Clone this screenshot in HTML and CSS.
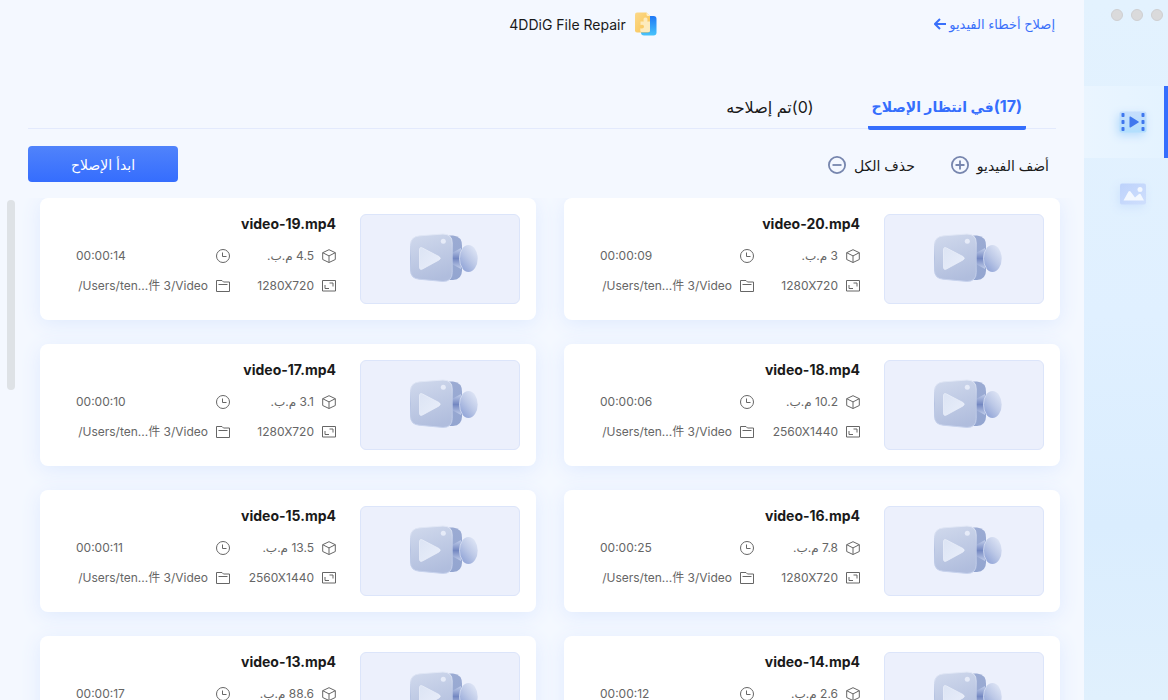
FILE: index.html
```html
<!DOCTYPE html>
<html lang="ar" dir="rtl">
<head>
<meta charset="utf-8">
<meta name="viewport" content="width=device-width, initial-scale=1">
<title>4DDiG File Repair</title>
<link rel="stylesheet" href="styles.css">
</head>
<body>
<svg class="sprite" aria-hidden="true">
  <defs>
    <linearGradient id="cam-body" x1=".2" y1="0" x2=".5" y2="1"><stop offset="0" stop-color="#cfd8ec"/><stop offset="1" stop-color="#b0bddd"/></linearGradient>
    <linearGradient id="cam-edge" x1="0" y1="0" x2="0" y2="1"><stop offset="0" stop-color="#e2e8f6"/><stop offset=".5" stop-color="#b6c3e2"/><stop offset="1" stop-color="#c8d3ed"/></linearGradient>
    <linearGradient id="cam-back" x1="0" y1="0" x2="0" y2="1"><stop offset="0" stop-color="#9babd3"/><stop offset="1" stop-color="#93a5d0"/></linearGradient>
    <linearGradient id="cam-play" x1="0" y1="0" x2="1" y2="1"><stop offset="0" stop-color="#dce4f4"/><stop offset="1" stop-color="#e9eefa"/></linearGradient>
    <linearGradient id="cam-neck" x1="0" y1="0" x2="0" y2="1"><stop offset="0" stop-color="#c3cfeb"/><stop offset=".5" stop-color="#7387c1"/><stop offset="1" stop-color="#c3cfeb"/></linearGradient>
    <linearGradient id="cam-lens" x1=".85" y1=".1" x2=".2" y2=".9"><stop offset="0" stop-color="#dde4f5"/><stop offset=".5" stop-color="#bdc9e7"/><stop offset="1" stop-color="#93a6d8"/></linearGradient>
    <linearGradient id="logo-gold" x1="0" y1="0" x2="1" y2="1"><stop offset="0" stop-color="#fcd98a"/><stop offset="1" stop-color="#f8c352"/></linearGradient>
    <linearGradient id="logo-blue" x1="0" y1="0" x2="0" y2="1"><stop offset="0" stop-color="#1f78f5"/><stop offset="1" stop-color="#48c4fb"/></linearGradient>
    <linearGradient id="nav-film" x1="0" y1="0" x2="0" y2="1"><stop offset="0" stop-color="#c6defd"/><stop offset="1" stop-color="#b2dffd"/></linearGradient>
    <linearGradient id="nav-photo" x1="0" y1="0" x2="1" y2="1"><stop offset="0" stop-color="#bdd2fb"/><stop offset="1" stop-color="#cfdffd"/></linearGradient>
  </defs>
  <symbol id="camera" viewBox="0 0 68 50">
    <path d="M36 2.500h7q9 1 9 10v25q0 9-9 9.500h-7z" fill="url(#cam-back)"/>
    <path d="M42 20l9-5v21l-9-5z" fill="url(#cam-neck)"/>
    <ellipse cx="58.500" cy="25.500" rx="9.200" ry="13.500" fill="url(#cam-lens)"/>
    <path d="M52.500 15.500q-3 4-3 10t3 10" fill="none" stroke="#d3dcf1" stroke-width=".8"/>
    <path d="M10 2.800L33 1q9.200 0 9.200 9v29.500q0 9-9.200 9L9 46.200Q.5 45.500.5 37V12.500Q.5 3.500 10 2.800z" fill="url(#cam-body)" stroke="url(#cam-edge)"/>
    <path d="M9.500 17q0-3.500 3-2l16.500 8.500q2.500 1.500 0 3.500l-16.500 9q-3 1.500-3-2z" fill="url(#cam-play)" stroke="#edf1fb" stroke-width=".7"/>
    <circle cx="33.300" cy="8.300" r="2.500" fill="#e6ebf8"/>
  </symbol>
  <symbol id="cube" viewBox="0 0 14 14"><path d="M7 .7l6.300 3v6.800l-6.300 3-6.300-3V3.700zM.7 3.700l6.300 3.200 6.300-3.200M7 6.900v6.500" fill="none" stroke="currentColor" stroke-linejoin="round"/></symbol>
  <symbol id="clock" viewBox="0 0 14 14"><circle cx="7" cy="7" r="6.500" fill="none" stroke="currentColor"/><path d="M6.500 3.500v4h4" fill="none" stroke="currentColor"/></symbol>
  <symbol id="frame" viewBox="0 0 14 14"><path d="M.5 1.500h13v10.500H.5z" fill="none" stroke="currentColor"/><path d="M3 6v3.500h4M7.500 4h3.500v3.500" fill="none" stroke="currentColor"/></symbol>
  <symbol id="folder" viewBox="0 0 14 14"><path d="M.5 12.500v-11h5.500l1.500 1.500h6v9.500zM2.500 5.500h9" fill="none" stroke="currentColor"/></symbol>
</svg>

<div class="window">
  <aside class="sidebar">
    <div class="lights"><span class="light"></span><span class="light"></span><span class="light"></span></div>
    <nav class="nav">
      <button class="nav-item nav-item-active" type="button" aria-label="الفيديو">
        <svg class="nav-icon" viewBox="0 0 28 24"><rect x=".5" y="1.500" width="27" height="21" rx="2" fill="url(#nav-film)"/><g fill="#3f77ee"><rect x="2.500" y="3" width="3" height="4" rx=".8"/><rect x="2.500" y="10" width="3" height="4" rx=".8"/><rect x="2.500" y="17" width="3" height="4" rx=".8"/><rect x="22.500" y="3" width="3" height="4" rx=".8"/><rect x="22.500" y="10" width="3" height="4" rx=".8"/><rect x="22.500" y="17" width="3" height="4" rx=".8"/><path d="M10.500 7.200q0-1.200 1-.6l8 4.800q.9.600 0 1.200l-8 4.800q-1 .6-1-.6z"/></g></svg>
      </button>
      <button class="nav-item" type="button" aria-label="الصور">
        <svg class="nav-icon nav-icon-dim" viewBox="0 0 28 24"><rect x="1" y="1.500" width="26" height="21" rx="2" fill="url(#nav-photo)"/><path d="M4.500 18.500L9.500 9.500q1-1.200 2 0l4.500 6 4-3.500q.8-.6 1.500 0l3.500 6.500z" fill="#f3f8ff"/><circle cx="21" cy="7.500" r="2.500" fill="#f3f8ff"/></svg>
      </button>
    </nav>
  </aside>

  <main class="main">
    <header class="header">
      <button class="back" type="button">إصلاح أخطاء الفيديو
        <svg class="back-icon" viewBox="0 0 12 12"><path d="M12 6H1.500M6 1L1 6l5 5" fill="none" stroke="currentColor" stroke-width="2"/></svg>
      </button>
      <h1 class="brand">
        <svg class="brand-logo" viewBox="0 0 24 24"><rect x="7" y="4" width="15.500" height="19.500" rx="3" fill="url(#logo-blue)"/><path d="M3 .5h9.500L16 4v14.500q0 2-2 2H3q-2 0-2-2V2.500q0-2 2-2z" fill="url(#logo-gold)"/><path d="M6.500 9.500h3.200Q8.800 5.500 11.500 5.500T13.300 9.500H16v9q0 1.500-1.500 1.500h-7q-1.200 0-1.200-1.200v-2.600q3.700.8 3.700-1.700T6.500 13z" fill="#fdebbd"/><path d="M12.500.5L16 4h-2q-1.500 0-1.500-1.500z" fill="#fff0c9"/></svg>
        <span dir="ltr">4DDiG File Repair</span>
      </h1>
    </header>

    <div class="tabs" role="tablist">
      <button class="tab tab-active" type="button" role="tab" aria-selected="true"><span class="count">(17)</span>في انتظار الإصلاح</button>
      <button class="tab" type="button" role="tab" aria-selected="false">(0)تم إصلاحه</button>
    </div>

    <div class="toolbar">
      <button class="tool" type="button">أضف الفيديو
        <svg class="tool-icon" viewBox="0 0 18 18"><circle cx="9" cy="9" r="8.100"/><path d="M4.500 9h9M9 4.500v9"/></svg>
      </button>
      <button class="tool" type="button">حذف الكل
        <svg class="tool-icon" viewBox="0 0 18 18"><circle cx="9" cy="9" r="8.100"/><path d="M4.500 9h9"/></svg>
      </button>
      <button class="start" type="button">ابدأ الإصلاح</button>
    </div>

    <div class="content">
      <ul class="list" id="list"></ul>
      <div class="rail"><div class="thumb-bar"></div></div>
    </div>
  </main>
</div>
<script src="app.js"></script>
</body>
</html>
```
FILE: app.js
```js
const videos = [
  [20, "3", "00:00:09", "1280X720"],
  [19, "4.5", "00:00:14", "1280X720"],
  [18, "10.2", "00:00:06", "2560X1440"],
  [17, "3.1", "00:00:10", "1280X720"],
  [16, "7.8", "00:00:25", "1280X720"],
  [15, "13.5", "00:00:11", "2560X1440"],
  [14, "2.6", "00:00:12", "1280X720"],
  [13, "88.6", "00:00:17", "1280X720"]
];

const icon = (name) => `<svg class="meta-icon"><use href="#${name}"/></svg>`;

document.getElementById("list").innerHTML = videos.map(([id, size, time, dims]) => `
  <li class="card">
    <div class="preview"><svg class="camera"><use href="#camera"/></svg></div>
    <div class="info">
      <h2 class="name" dir="ltr">video-${id}.mp4</h2>
      <div class="meta">
        <div class="field">${icon("cube")}<span>${size} م.ب.</span></div>
        <div class="field">${icon("clock")}<span class="time" dir="ltr">${time}</span></div>
        <div class="field">${icon("frame")}<span dir="ltr">${dims}</span></div>
        <div class="field">${icon("folder")}<span dir="ltr">/Users/ten...件 3/Video</span></div>
      </div>
    </div>
  </li>`).join("");
```
FILE: styles.css
```css
* {
  box-sizing: border-box;
}

body {
  margin: 0;
  font-family: Inter, "DejaVu Sans", "Noto Sans CJK SC", sans-serif;
  font-size: 14px;
  color: #1a1a1a;
  background: #f4f8ff;
}

button {
  padding: 0;
  border: 0;
  background: none;
  color: inherit;
  font: inherit;
  cursor: pointer;
}

svg {
  display: block;
  flex: none;
}

.sprite {
  position: absolute;
  width: 0;
  height: 0;
}

.window {
  display: flex;
  height: 100vh;
  overflow: hidden;
}

.sidebar {
  flex: 0 0 84px;
  background: linear-gradient(180deg, #e3f2fe 0%, #e0f0ff 45%, #daedfe 75%, #e0f0fd 100%);
}

.lights {
  display: flex;
  gap: 8px;
  height: 86px;
  padding: 9px 5px 0;
}

.light {
  width: 12px;
  height: 12px;
  border: 1px solid #cfcfd1;
  border-radius: 50%;
  background: #dadadb;
}

.nav-item {
  display: flex;
  align-items: center;
  justify-content: center;
  width: 100%;
  height: 72px;
  padding-left: 14px;
}

.nav-item-active {
  padding-left: 18px;
  border-right: 4px solid #356efd;
  background: linear-gradient(90deg, #eaf5ff, #e4f3ff);
}

.nav-icon {
  width: 28px;
  height: 24px;
  filter: drop-shadow(-2px 3px 4px #b9dcfc);
}

.nav-icon-dim {
  filter: drop-shadow(-2px 3px 4px #cfe3fd);
}

.main {
  display: flex;
  flex: 1;
  flex-direction: column;
  min-width: 0;
}

.header {
  display: grid;
  grid-template-columns: 1fr auto 1fr;
  align-items: center;
  height: 48px;
  padding: 0 29px 0 112px;
}

.back {
  display: flex;
  align-items: center;
  justify-self: start;
  gap: 3px;
  color: #3a70fa;
  font-size: 13px;
}

.back-icon {
  width: 12px;
  height: 12px;
}

.brand {
  display: flex;
  align-items: center;
  gap: 8px;
  margin: 0;
  font-size: 14px;
  font-weight: 400;
}

.brand-logo {
  width: 24px;
  height: 24px;
}

.tabs {
  display: flex;
  gap: 50px;
  margin: 38px 28px 0;
  padding: 0 30px;
  border-bottom: 1px solid #e3eafd;
}

.tab {
  height: 42px;
  padding: 0 4px;
  font-size: 16px;
}

.tab-active {
  height: 44px;
  margin-bottom: -2px;
  border-bottom: 4px solid #356efd;
  border-radius: 2px;
  color: #356efd;
  font-size: 14px;
  font-weight: 700;
}

.count {
  font-size: 16px;
}

.toolbar {
  display: flex;
  align-items: center;
  gap: 36px;
  padding: 17px 35px 16px 28px;
}

.tool {
  display: flex;
  align-items: center;
  gap: 8px;
  padding-top: 2px;
}

.tool-icon {
  width: 18px;
  height: 18px;
  fill: none;
  stroke: #7786ae;
  stroke-width: 1.8;
}

.start {
  width: 150px;
  height: 36px;
  margin-right: auto;
  border-radius: 4px;
  background: linear-gradient(180deg, #5083fb, #356dfe);
  color: #fff;
}

.content {
  display: flex;
  flex: 1;
  min-height: 0;
  overflow: hidden;
}

.list {
  display: grid;
  flex: 1;
  grid-template-columns: 1fr 1fr;
  align-content: start;
  gap: 24px 28px;
  margin: 0;
  padding: 0 24px 24px 25px;
  list-style: none;
}

.rail {
  width: 15px;
  padding: 2px 0 0 7px;
}

.thumb-bar {
  width: 8px;
  height: 190px;
  border-radius: 4px;
  background: #dee2e6;
}

.card {
  display: flex;
  gap: 24px;
  padding: 16px;
  border-radius: 8px;
  background: #fff;
  box-shadow: 0 4px 20px #dfeafe;
}

.preview {
  display: flex;
  flex: 0 0 160px;
  align-items: center;
  justify-content: center;
  height: 90px;
  padding: 0 8px 2px 0;
  padding-inline: 0 8px;
  border: 1px solid #dce5fa;
  border-radius: 6px;
  background: #ecf0fc;
}

.preview {
  padding: 0 0 2px 8px;
}

.camera {
  width: 68px;
  height: 50px;
}

.info {
  flex: 1;
  min-width: 0;
  padding-left: 20px;
}

.name {
  margin: 0 0 12px;
  font-size: 14px;
  font-weight: 700;
  line-height: 20px;
  text-align: right;
}

.meta {
  display: grid;
  grid-template-columns: 106px 1fr;
  gap: 10px 0;
  margin-bottom: -2px;
  color: #666;
  font-size: 12px;
  line-height: 20px;
}

.field {
  display: flex;
  align-items: center;
  gap: 8px;
  height: 20px;
  white-space: nowrap;
}

.meta-icon {
  width: 14px;
  height: 14px;
}

.time {
  flex: 1;
  text-align: left;
}
```
